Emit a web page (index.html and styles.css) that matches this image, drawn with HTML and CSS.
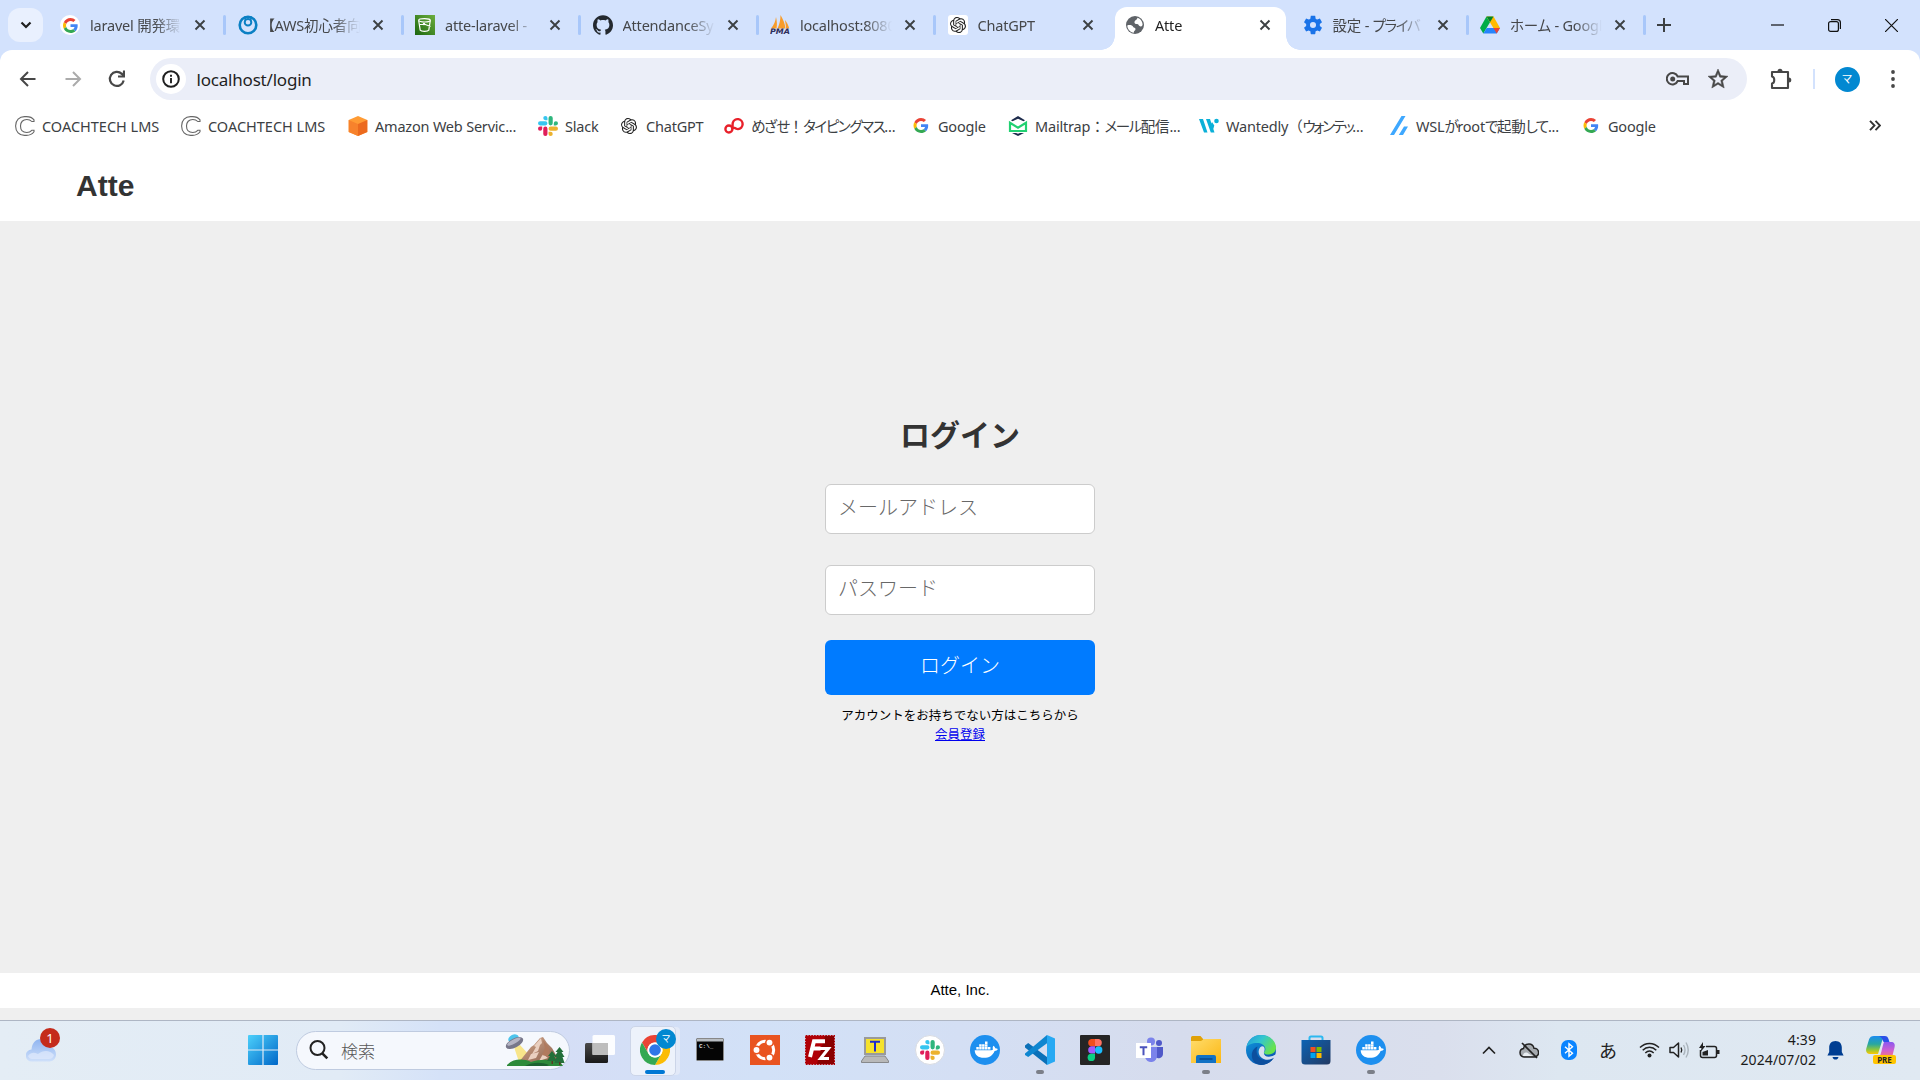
FILE: index.html
```html
<!DOCTYPE html>
<html lang="ja">
<head>
<meta charset="utf-8">
<title>Atte</title>
<link rel="stylesheet" href="styles.css">
</head>
<body>
<svg class="defs" aria-hidden="true">
  <defs>
    <linearGradient id="gWin" x1="0" y1="0" x2="1" y2="1"><stop offset="0" stop-color="#4cd0fb"/><stop offset="1" stop-color="#0067c8"/></linearGradient>
    <linearGradient id="gCloud" x1="0" y1="0" x2="0" y2="1"><stop offset="0" stop-color="#8fb4f0"/><stop offset="1" stop-color="#cfe0fa"/></linearGradient>
    <linearGradient id="gFolder" x1="0" y1="0" x2="1" y2="1"><stop offset="0" stop-color="#ffdc6b"/><stop offset="1" stop-color="#fcb713"/></linearGradient>
    <linearGradient id="gEdgeTop" x1="0" y1="0" x2="1" y2=".5"><stop offset="0" stop-color="#2297dc"/><stop offset=".5" stop-color="#33c6cf"/><stop offset="1" stop-color="#68e34c"/></linearGradient>
    <linearGradient id="gEdgeMid" x1="0" y1="0" x2=".6" y2="1"><stop offset="0" stop-color="#0f9be0"/><stop offset="1" stop-color="#0b56b0"/></linearGradient>
    <linearGradient id="gStore" x1="0" y1="0" x2="1" y2="1"><stop offset="0" stop-color="#0c63b4"/><stop offset="1" stop-color="#233a63"/></linearGradient>
    <linearGradient id="gMount" x1="0" y1="0" x2="1" y2="1"><stop offset="0" stop-color="#d3a88c"/><stop offset="1" stop-color="#8a5f4c"/></linearGradient>
    <linearGradient id="gCopA" x1="0" y1="0" x2="0" y2="1"><stop offset="0" stop-color="#1a8cf0"/><stop offset=".45" stop-color="#28a7a0"/><stop offset=".75" stop-color="#8cc63e"/><stop offset="1" stop-color="#ffc800"/></linearGradient>
    <linearGradient id="gCopB" x1="0" y1="0" x2="0" y2="1"><stop offset="0" stop-color="#8a58f0"/><stop offset=".5" stop-color="#d060d0"/><stop offset="1" stop-color="#ff7e62"/></linearGradient>
    <linearGradient id="gBucket" x1="0" y1="1" x2="1" y2="0"><stop offset="0" stop-color="#1b660f"/><stop offset="1" stop-color="#6cae3e"/></linearGradient>
    <linearGradient id="gDark" x1="0" y1="0" x2="0" y2="1"><stop offset="0" stop-color="#4a4a4a"/><stop offset="1" stop-color="#191919"/></linearGradient>

    <symbol id="google" viewBox="0 0 48 48">
      <path fill="#EA4335" d="M24 9.5c3.54 0 6.71 1.22 9.21 3.6l6.85-6.85C35.9 2.38 30.47 0 24 0 14.62 0 6.51 5.38 2.56 13.22l7.98 6.19C12.43 13.72 17.74 9.5 24 9.5z"/>
      <path fill="#4285F4" d="M46.98 24.55c0-1.57-.15-3.09-.38-4.55H24v9.02h12.94c-.58 2.96-2.26 5.48-4.78 7.18l7.73 6c4.51-4.18 7.09-10.36 7.09-17.65z"/>
      <path fill="#FBBC05" d="M10.53 28.59c-.48-1.45-.76-2.99-.76-4.59s.27-3.14.76-4.59l-7.98-6.19C.92 16.46 0 20.12 0 24c0 3.88.92 7.54 2.56 10.78l7.97-6.19z"/>
      <path fill="#34A853" d="M24 48c6.48 0 11.93-2.13 15.89-5.81l-7.73-6c-2.15 1.45-4.92 2.3-8.16 2.3-6.26 0-11.57-4.22-13.47-9.91l-7.98 6.19C6.51 42.62 14.62 48 24 48z"/>
    </symbol>
    <symbol id="openai" viewBox="0 0 24 24">
      <path fill="#222" d="M22.2819 9.8211a5.9847 5.9847 0 0 0-.5157-4.9108 6.0462 6.0462 0 0 0-6.5098-2.9A6.0651 6.0651 0 0 0 4.9807 4.1818a5.9847 5.9847 0 0 0-3.9977 2.9 6.0462 6.0462 0 0 0 .7427 7.0966 5.98 5.98 0 0 0 .511 4.9107 6.051 6.051 0 0 0 6.5146 2.9001A5.9847 5.9847 0 0 0 13.2599 24a6.0557 6.0557 0 0 0 5.7718-4.2058 5.9894 5.9894 0 0 0 3.9977-2.9001 6.0557 6.0557 0 0 0-.7475-7.0729zm-9.022 12.6081a4.4755 4.4755 0 0 1-2.8764-1.0408l.1419-.0804 4.7783-2.7582a.7948.7948 0 0 0 .3927-.6813v-6.7369l2.02 1.1686a.071.071 0 0 1 .038.052v5.5826a4.504 4.504 0 0 1-4.4945 4.4944zm-9.6607-4.1254a4.4708 4.4708 0 0 1-.5346-3.0137l.142.0852 4.783 2.7582a.7712.7712 0 0 0 .7806 0l5.8428-3.3685v2.3324a.0804.0804 0 0 1-.0332.0615L9.74 19.9502a4.4992 4.4992 0 0 1-6.1408-1.6464zM2.3408 7.8956a4.485 4.485 0 0 1 2.3655-1.9728V11.6a.7664.7664 0 0 0 .3879.6765l5.8144 3.3543-2.0201 1.1685a.0757.0757 0 0 1-.071 0l-4.8303-2.7865A4.504 4.504 0 0 1 2.3408 7.872zm16.5963 3.8558L13.1038 8.364 15.1192 7.2a.0757.0757 0 0 1 .071 0l4.8303 2.7913a4.4944 4.4944 0 0 1-.6765 8.1042v-5.6772a.79.79 0 0 0-.407-.667zm2.0107-3.0231l-.142-.0852-4.7735-2.7818a.7759.7759 0 0 0-.7854 0L9.409 9.2297V6.8974a.0662.0662 0 0 1 .0284-.0615l4.8303-2.7866a4.4992 4.4992 0 0 1 6.6802 4.66zM8.3065 12.863l-2.02-1.1638a.0804.0804 0 0 1-.038-.0567V6.0742a4.4992 4.4992 0 0 1 7.3757-3.4537l-.142.0805L8.704 5.459a.7948.7948 0 0 0-.3927.6813zm1.0976-2.3654l2.602-1.4998 2.6069 1.4998v2.9994l-2.5974 1.4997-2.6067-1.4997Z"/>
    </symbol>
    <path id="slackArm" d="M5.042 15.165a2.528 2.528 0 0 1-2.52 2.523A2.528 2.528 0 0 1 0 15.165a2.527 2.527 0 0 1 2.522-2.52h2.52v2.52zM6.313 15.165a2.527 2.527 0 0 1 2.521-2.52 2.527 2.527 0 0 1 2.521 2.52v6.313A2.528 2.528 0 0 1 8.834 24a2.528 2.528 0 0 1-2.521-2.522v-6.313z"/>
    <symbol id="slack" viewBox="0 0 24 24">
      <use href="#slackArm" fill="#E01E5A"/>
      <use href="#slackArm" fill="#36C5F0" transform="rotate(90 12 12)"/>
      <use href="#slackArm" fill="#2EB67D" transform="rotate(180 12 12)"/>
      <use href="#slackArm" fill="#ECB22E" transform="rotate(270 12 12)"/>
    </symbol>
    <symbol id="close" viewBox="0 0 12 12"><path d="M1.5 1.5l9 9M10.5 1.5l-9 9" fill="none" stroke="#3c4043" stroke-width="1.9"/></symbol>
    <symbol id="coach" viewBox="0 0 20 20">
      <path d="M19 5.5V3.8C17.300 1.600 14.800.6 11.500.6H9.500C4.300.6.6 4.500.6 10s3.700 9.400 8.900 9.400h2c3.300 0 5.800-1.200 7.500-3.600v-1.500h-2.200c-1.200 1.400-2.800 2.200-5 2.200-3.900 0-6.300-2.500-6.300-6.500s2.400-6.500 6.300-6.500c2.200 0 3.800.7 5 2z" fill="none" stroke="#666" stroke-width="1.100"/>
    </symbol>
    <symbol id="docker" viewBox="0 0 30 30">
      <circle cx="15" cy="15" r="15" fill="#1d8fef"/>
      <path fill="#fff" d="M4.700 15.300h16.500c.8 0 1.500-.3 1.800-.8-.5-1.300-.4-2.600.4-3.800 1.100.7 1.700 1.600 1.800 2.600 1 0 1.900.1 2.700.7-.6 1.300-1.700 1.900-3.300 1.900-2 4.700-5.500 6.900-10.600 6.900-5.800 0-9.200-2.600-9.300-7.500z"/>
      <path fill="#fff" d="M6.300 12h2.500v2.500H6.300zM9.200 12h2.500v2.500H9.200zM12.100 12h2.500v2.500h-2.500zM15 12h2.500v2.500H15zM17.900 12h2.500v2.500h-2.500zM9.200 9.200h2.500v2.500H9.200zM12.100 9.200h2.500v2.500h-2.500zM15 9.200h2.500v2.500H15zM15 6.400h2.500v2.500H15z"/>
    </symbol>
  </defs>
</svg>

<div class="screen">
  <div class="tabstrip">
    <button class="tab-search"><svg width="12" height="8" viewBox="0 0 12 8"><path d="M1.500 1.500L6 6l4.500-4.500" fill="none" stroke="#1f1f1f" stroke-width="2.200"/></svg></button>
    <div class="tabs">
      <div class="tab">
        <span class="fav fav-round"><svg width="15" height="15"><use href="#google"/></svg></span>
        <span class="tab-title">laravel 開発環</span><svg class="x" width="12" height="12"><use href="#close"/></svg><i class="sep"></i>
      </div>
      <div class="tab">
        <span class="fav"><svg width="20" height="20" viewBox="0 0 20 20"><circle cx="10" cy="10" r="8.300" fill="none" stroke="#0b80c4" stroke-width="2.600"/><circle cx="10" cy="7.200" r="3.300" fill="none" stroke="#0b80c4" stroke-width="2"/><path d="M7.200 1v5M12.800 1v5" stroke="#0b80c4" stroke-width="1.500"/></svg></span>
        <span class="tab-title">【AWS初心者向</span><svg class="x" width="12" height="12"><use href="#close"/></svg><i class="sep"></i>
      </div>
      <div class="tab">
        <span class="fav"><svg width="20" height="20" viewBox="0 0 20 20"><path fill="url(#gBucket)" d="M0 0h20v20H0z"/><g fill="none" stroke="#fff" stroke-width="1.200"><ellipse cx="9.500" cy="5.300" rx="5.800" ry="1.700"/><path d="M3.700 5.500l1.500 9.700c1 1.500 7.600 1.500 8.600 0l1.500-9.700M9 9l6.500 2.500M5 9.500h6"/></g><circle cx="9" cy="9" r="1.200" fill="#fff"/></svg></span>
        <span class="tab-title">atte-laravel -</span><svg class="x" width="12" height="12"><use href="#close"/></svg><i class="sep"></i>
      </div>
      <div class="tab">
        <span class="fav"><svg width="20" height="20" viewBox="0 0 24 24"><path fill="#24292f" d="M12 .297c-6.630 0-12 5.373-12 12 0 5.303 3.438 9.800 8.205 11.385.6.113.82-.258.82-.577 0-.285-.01-1.040-.015-2.040-3.338.724-4.042-1.610-4.042-1.610C4.422 18.070 3.633 17.700 3.633 17.700c-1.087-.744.084-.729.084-.729 1.205.084 1.838 1.236 1.838 1.236 1.070 1.835 2.809 1.305 3.495.998.108-.776.417-1.305.76-1.605-2.665-.3-5.466-1.332-5.466-5.930 0-1.310.465-2.380 1.235-3.220-.135-.303-.54-1.523.105-3.176 0 0 1.005-.322 3.300 1.230.96-.267 1.980-.399 3-.405 1.020.006 2.040.138 3 .405 2.280-1.552 3.285-1.230 3.285-1.230.645 1.653.24 2.873.12 3.176.765.84 1.230 1.910 1.230 3.220 0 4.610-2.805 5.625-5.475 5.920.42.36.81 1.096.81 2.220 0 1.606-.015 2.896-.015 3.286 0 .315.21.69.825.57C20.565 22.092 24 17.592 24 12.297c0-6.627-5.373-12-12-12"/></svg></span>
        <span class="tab-title">AttendanceSy</span><svg class="x" width="12" height="12"><use href="#close"/></svg><i class="sep"></i>
      </div>
      <div class="tab">
        <span class="fav"><svg width="20" height="20" viewBox="0 0 20 20"><path fill="#f89c2a" d="M1 13.500C4 10 5.500 6 6 2c1 4 1.200 8 .5 11.500zM7.500 13.500C9.500 9 10.500 5 10.500 0c2.500 4 4.500 9 5 13.500zM15 5c2 2.500 3.500 5.500 4.200 8.500h-3z"/><text class="pma" x="0" y="19" textLength="20" lengthAdjust="spacingAndGlyphs">PMA</text></svg></span>
        <span class="tab-title">localhost:8080</span><svg class="x" width="12" height="12"><use href="#close"/></svg><i class="sep"></i>
      </div>
      <div class="tab">
        <span class="fav fav-square"><svg width="16" height="16"><use href="#openai"/></svg></span>
        <span class="tab-title">ChatGPT</span><svg class="x" width="12" height="12"><use href="#close"/></svg>
      </div>
      <div class="tab active">
        <span class="fav"><svg width="20" height="20" viewBox="0 0 20 20"><circle cx="10" cy="10" r="9" fill="#5f6368"/><path fill="#fff" d="M2.300 10.500c2.200-.8 5.200-.3 5.800 1.200.5 1.300 2.600.8 2.400 2.500-.2 1.500-1.800 1.500-1.700 3.500-3.600-.4-6.500-3.600-6.500-7.200zM12.500 2.800c3 1 5.200 4 5.100 7.200-1.100 1.500-1.900 2-3.100 1.100-1-.8-.8-2-2.500-2.100-1.800 0-2.800-.8-2.500-2.300.3-1.400 2.600-1.500 3-3.900z"/></svg></span>
        <span class="tab-title">Atte</span><svg class="x" width="12" height="12"><use href="#close"/></svg>
      </div>
      <div class="tab">
        <span class="fav"><svg width="22" height="22" viewBox="0 0 24 24"><path fill="#1a73e8" fill-rule="evenodd" d="M19.430 12.980c.04-.32.07-.64.07-.98s-.03-.66-.07-.98l2.110-1.650c.19-.15.24-.42.12-.64l-2-3.460c-.12-.22-.39-.3-.61-.22l-2.490 1c-.52-.4-1.080-.73-1.690-.98l-.38-2.650C14.460 2.180 14.250 2 14 2h-4c-.25 0-.46.18-.49.42l-.38 2.650c-.61.25-1.170.59-1.690.98l-2.490-1c-.23-.09-.49 0-.61.22l-2 3.460c-.13.22-.07.49.12.64l2.110 1.650c-.04.32-.07.65-.07.98s.03.66.07.98l-2.110 1.650c-.19.15-.24.42-.12.64l2 3.460c.12.22.39.3.61.22l2.490-1c.52.4 1.080.73 1.690.98l.38 2.650c.03.24.24.42.49.42h4c.25 0 .46-.18.49-.42l.38-2.650c.61-.25 1.170-.59 1.690-.98l2.490 1c.23.09.49 0 .61-.22l2-3.460c.12-.22.07-.49-.12-.64zM12 15.300a3.300 3.300 0 1 1 0-6.600 3.300 3.300 0 0 1 0 6.600z"/></svg></span>
        <span class="tab-title">設定 - <span class="kana">プライバ</span></span><svg class="x" width="12" height="12"><use href="#close"/></svg><i class="sep"></i>
      </div>
      <div class="tab">
        <span class="fav"><svg width="20" height="20" viewBox="0 0 20 20"><path fill="#00ac47" d="M6.500 1.500L0 13l3.300 5.500L10 7.200z"/><path fill="#ffba00" d="M6.500 1.500h7L20 13h-6.600z"/><path fill="#2684fc" d="M6.700 13H20l-3.300 5.500H3.300z"/><path fill="#ea4335" d="M13.400 13H20l-3.300 5.500z"/><path fill="#00832d" d="M6.500 1.500h7L10 7.200z"/></svg></span>
        <span class="tab-title">ホーム - Googl</span><svg class="x" width="12" height="12"><use href="#close"/></svg><i class="sep"></i>
      </div>
    </div>
    <svg class="new-tab" width="14" height="14" viewBox="0 0 14 14"><path d="M7 0v14M0 7h14" stroke="#3c4043" stroke-width="2"/></svg>
    <div class="win-controls">
      <svg width="13" height="13" viewBox="0 0 13 13"><path d="M0 6h13" stroke="#111" stroke-width="1.200"/></svg>
      <svg width="13" height="13" viewBox="0 0 13 13"><path d="M.6 4.600a2 2 0 0 1 2-2h5.800a2 2 0 0 1 2 2v5.800a2 2 0 0 1-2 2H2.600a2 2 0 0 1-2-2zM3 .6h6.400a3 3 0 0 1 3 3V10" fill="none" stroke="#111" stroke-width="1.200"/></svg>
      <svg width="13" height="13" viewBox="0 0 13 13"><path d="M0 0l13 13M13 0L0 13" stroke="#111" stroke-width="1.200"/></svg>
    </div>
  </div>

  <div class="toolbar">
    <svg class="nav" width="24" height="24" viewBox="0 0 24 24"><path fill="none" stroke="#474747" stroke-width="2" d="M19.500 12H5M12 5l-7 7 7 7"/></svg>
    <svg class="nav" width="24" height="24" viewBox="0 0 24 24"><path fill="none" stroke="#ababab" stroke-width="2" d="M4.500 12H19M12 5l7 7-7 7"/></svg>
    <svg class="nav" width="24" height="24" viewBox="0 0 24 24"><path fill="none" stroke="#474747" stroke-width="2.200" d="M18.700 13.500a7 7 0 1 1-1.900-6.600l2.200 2.200"/><path fill="#474747" d="M20 3.500v7h-7v-2h4.500l.5-5z"/></svg>
    <div class="omnibox">
      <span class="site-info"><svg width="18" height="18" viewBox="0 0 18 18"><circle cx="9" cy="9" r="7.800" fill="none" stroke="#1f1f1f" stroke-width="2"/><path d="M9 8v5.300M9 4.700v2" stroke="#1f1f1f" stroke-width="1.900"/></svg></span>
      <span class="url">localhost/login</span>
      <svg class="key" width="24" height="14" viewBox="0 0 24 14"><path fill="none" stroke="#474747" stroke-width="2" d="M11.700 4.500H22V12h-4V9h-6.300A5.700 5.700 0 1 1 11.700 4.500z"/><circle cx="6.700" cy="7" r="2.500" fill="#474747"/></svg>
      <svg class="star" width="24" height="24" viewBox="0 0 24 24"><path fill="#474747" stroke="#474747" stroke-width=".5" d="M22 9.240l-7.190-.62L12 2 9.190 8.630 2 9.240l5.460 4.730L5.820 21 12 17.270 18.180 21l-1.630-7.030L22 9.240zM12 15.400l-3.760 2.270 1-4.280-3.320-2.880 4.380-.38L12 6.100l1.710 4.040 4.380.38-3.320 2.880 1 4.280L12 15.400z"/></svg>
    </div>
    <svg class="ext" width="24" height="24" viewBox="0 0 24 24"><path fill="none" stroke="#474747" stroke-width="2.100" stroke-linejoin="round" d="M3 5h16v16H3v-4.500c3-.5 3-6.500 0-7z"/><path fill="#474747" d="M8.500 4.200a2.500 2.500 0 0 1 5 0zM19.800 10.500a2.500 2.500 0 0 1 0 5z"/></svg>
    <i class="tb-sep"></i>
    <span class="avatar">マ</span>
    <svg class="more" width="4" height="20" viewBox="0 0 4 20"><g fill="#474747"><circle cx="2" cy="3" r="1.900"/><circle cx="2" cy="10" r="1.900"/><circle cx="2" cy="17" r="1.900"/></g></svg>
  </div>

  <div class="bookmarks">
    <span class="bm caps"><svg width="20" height="20"><use href="#coach"/></svg><b>COACHTECH LMS</b></span>
    <span class="bm caps"><svg width="20" height="20"><use href="#coach"/></svg><b>COACHTECH LMS</b></span>
    <span class="bm"><svg width="20" height="20" viewBox="0 0 20 20"><path fill="#ff9b34" d="M10 0l9.300 4v12L10 20 .7 16V4z"/><path fill="#f7822c" d="M.7 4L10 8v12L.7 16z"/><path fill="#ec6a1e" d="M19.300 4L10 8v12l9.300-4z"/></svg><b>Amazon Web Servic...</b></span>
    <span class="bm"><svg width="20" height="20"><use href="#slack"/></svg><b>Slack</b></span>
    <span class="bm"><svg width="20" height="16" viewBox="0 0 24 24"><use href="#openai"/></svg><b>ChatGPT</b></span>
    <span class="bm"><svg width="20" height="18" viewBox="0 0 20 18"><g fill="none" stroke="#e8202a" stroke-width="2.400"><circle cx="4.900" cy="12" r="3.500"/><path d="M8.400 12C9 10 8.200 8 8.800 5.800a5 5 0 1 1 5.200 6.300c-2.600.2-3.700-1.700-5.600-2.300"/></g></svg><b><span class="kana">めざせ</span><span class="full">！</span><span class="kana">タイピングマス</span>...</b></span>
    <span class="bm"><svg width="20" height="15"><use href="#google"/></svg><b>Google</b></span>
    <span class="bm"><svg width="20" height="20" viewBox="0 0 20 20"><path fill="none" stroke="#22d172" stroke-width="2.200" d="M2 15V6.800l8 5 8-5V15z"/><path fill="#1d2b4c" d="M3 4.200L10 0l7 4.200-1.500 1L10 2.800 4.500 5.200zM4 17h4l2 .8 2-.8h4l-6 3z"/></svg><b>Mailtrap<span class="full">：</span><span class="kana">メール</span>配信...</b></span>
    <span class="bm"><svg width="20" height="16" viewBox="0 0 20 16"><path fill="#0bb0d8" d="M0 1h4l4.500 13.500H5zM7 1h4l4.500 13.500h-3.700zM11.500 9l1.500-5 2.300 3.500-2 7z"/><circle cx="17.500" cy="3" r="2.300" fill="#0bb0d8"/></svg><b>Wantedly<span class="full">（</span><span class="kana tight">ウォンテッ</span>...</b></span>
    <span class="bm"><svg width="20" height="20" viewBox="0 0 20 20"><path fill="#3ea8ff" d="M12.500 0h4L5 19H1zM15 10.500h4L14 19h-4.200z"/></svg><b>WSL<span class="kana">が</span>root<span class="kana">で</span>起動<span class="kana">して</span>...</b></span>
    <span class="bm"><svg width="20" height="15"><use href="#google"/></svg><b>Google</b></span>
    <svg class="overflow" width="12" height="11" viewBox="0 0 12 11"><path d="M1 .8l4.500 4.700L1 10.200M6.500.8L11 5.500l-4.500 4.700" fill="none" stroke="#333" stroke-width="1.900"/></svg>
  </div>

  <div class="page">
    <header class="header"><h1 class="logo">Atte</h1></header>
    <main class="main">
      <h2 class="title">ログイン</h2>
      <form class="form">
        <input class="field" type="email" placeholder="メールアドレス">
        <input class="field" type="password" placeholder="パスワード">
        <button class="submit" type="button">ログイン</button>
      </form>
      <p class="note">アカウントをお持ちでない方はこちらから</p>
      <a class="register" href="#">会員登録</a>
    </main>
    <footer class="footer">Atte, Inc.</footer>
  </div>

  <div class="taskbar">
    <div class="weather">
      <svg width="30" height="24" viewBox="0 0 30 24"><path fill="url(#gCloud)" d="M6 23.500a6 6 0 0 1-.5-12C6 5 10 1 15 1c5 0 8.300 3.300 9 8 3.500.5 6 3.500 6 7.500 0 4-3 7-6.500 7z"/><path fill="#dfeafc" opacity=".7" d="M2 18c3-4 6-4 10-2 5-4 12-4 16 1-1 3-3 4-5 4H6c-2 0-3-1-4-3z"/></svg>
      <span class="count">1</span>
    </div>
    <svg class="start" width="30" height="30" viewBox="0 0 30 30"><path fill="url(#gWin)" d="M1 0h13.400v14.400H0V1a1 1 0 0 1 1-1zM15.600 0H29a1 1 0 0 1 1 1v13.400H15.600zM0 15.600h14.400V30H1a1 1 0 0 1-1-1zM15.600 15.600H30V29a1 1 0 0 1-1 1H15.600z"/></svg>
    <div class="search">
      <svg width="20" height="20" viewBox="0 0 20 20"><circle cx="8.500" cy="8" r="7" fill="none" stroke="#222" stroke-width="2"/><path d="M13.300 13.300l5 5" stroke="#222" stroke-width="2.600"/></svg>
      <span class="search-text">検索</span>
      <svg class="art" width="60" height="32" viewBox="0 0 60 32">
        <path fill="#f8e58a" d="M9 13l6-2 11 12-12 5z"/>
        <path fill="url(#gMount)" d="M14 28L26 13l3-2 6-7 3-1 4 6 5 5 8 14z"/>
        <path fill="#ead0c0" d="M36 4l-7 8 2 1-4 7 6-3 2-6 2-2zM26 20l-3 6 8-2 3-6zM38 20l-4 7 9-3z"/>
        <path fill="#b07a5e" d="M38 6l2 8-3 7 8 2-1-9z"/>
        <path fill="#2d8a3a" d="M2 31c5-6 16-7 24-3 9-3 22-3 30 1l2 3H2z"/>
        <path fill="#1c6130" d="M20 32c8-4 16-4 24-1l-2 1z"/>
        <path fill="#24703a" d="M47 17l-4 5h2l-3 5h10l-3-5h2zM54.500 13l-4 5h2l-3 5h2l-2 6h10l-2-6h2l-3-5h2z"/>
        <path fill="#5a3a22" d="M46.500 27h1.500v3h-1.500zM54 28h1.500v3H54z"/>
        <ellipse cx="8.500" cy="4.500" rx="5.500" ry="3.800" fill="#4cc4ec" transform="rotate(-25 8.500 4.500)"/>
        <ellipse cx="9.500" cy="9" rx="9.500" ry="4.600" fill="#77778a" transform="rotate(-28 9.500 9)"/>
        <ellipse cx="8.800" cy="7.600" rx="7.500" ry="2.200" fill="#b4b4c4" transform="rotate(-28 8.800 7.600)"/>
      </svg>
    </div>
    <div class="apps">
      <span class="app"><svg width="30" height="30" viewBox="0 0 30 30"><rect x="0" y="8" width="23" height="20" rx="1.500" fill="url(#gDark)"/><rect x="7.500" y="0" width="22.500" height="20" rx="1.500" fill="#fff" opacity=".93"/><path d="M7.500 8H23v12H7.500z" fill="#bdbdbd"/></svg></span>
      <span class="app current"><svg width="30" height="30" viewBox="0 0 48 48"><circle cx="24" cy="24" r="24" fill="#fff"/><path fill="#ea4335" d="M3.200 12A24 24 0 0 1 44.800 12H24a12 12 0 0 0-10.400 18z"/><path fill="#fbbc05" d="M44.800 12A24 24 0 0 1 24 48l10.400-18A12 12 0 0 0 24 12z"/><path fill="#34a853" d="M24 48A24 24 0 0 1 3.200 12l10.400 18A12 12 0 0 0 34.400 30z"/><circle cx="24" cy="24" r="12" fill="#fff"/><circle cx="24" cy="24" r="9.300" fill="#2f76e8"/></svg><em class="profile">マ</em></span>
      <span class="app"><svg width="28" height="24" viewBox="0 0 28 24"><rect x=".5" y=".5" width="27" height="22" rx="1" fill="#050505" stroke="#888"/><path fill="#b9bec3" d="M1 1h26v2.500H1z"/><text class="cmd" x="3" y="9.500">C:\_</text></svg></span>
      <span class="app"><svg width="30" height="30" viewBox="0 0 30 30"><path fill="#e95420" d="M0 0h30v30H0z"/><circle cx="15" cy="15" r="8.700" fill="none" stroke="#fff" stroke-width="3"/><g fill="#fff" stroke="#e95420" stroke-width="1.500"><circle cx="6.500" cy="15" r="3.700"/><circle cx="19.500" cy="7.600" r="3.700"/><circle cx="19.500" cy="22.600" r="3.700"/></g></svg></span>
      <span class="app"><svg width="30" height="30" viewBox="0 0 30 30"><rect x=".7" y=".7" width="28.600" height="28.600" fill="#b00006" stroke="#b00006" stroke-width="1.400" stroke-dasharray="1.600 1.200"/><path fill="#8a0000" d="M20 1l9 0v28H12z"/><g fill="none" stroke="#fff" stroke-width="4"><path d="M5 22L9 6.300H20M7.500 13.500h8"/><path stroke-width="3" d="M15 13.500h8.500L15.500 23.500H24"/></g></svg></span>
      <span class="app"><svg width="28" height="26" viewBox="0 0 28 26"><path fill="#9a9a9a" d="M3 0h22v18H3z"/><path fill="#f6e22c" d="M5 2h18v14H5z"/><path fill="#b9b9b9" stroke="#777" stroke-width=".8" d="M4 19h20l3.500 5v1.500H.5V24z"/><path d="M9 4.800h10M14 5v9.500" stroke="#1c2bd0" stroke-width="2"/></svg></span>
      <span class="app"><span class="disc"><svg width="20" height="20"><use href="#slack"/></svg></span></span>
      <span class="app"><svg width="30" height="30"><use href="#docker"/></svg></span>
      <span class="app running"><svg width="30" height="30" viewBox="0 0 30 30"><path fill="#0b70b8" d="M0 10.500L3.200 8 22 22v8L0 12.500z"/><path fill="#0e86d0" d="M0 18.500L22 0v8.200L3.200 22 0 20z"/><path fill="#27a9f3" d="M22 0l8 3.500v23L22 30z"/></svg></span>
      <span class="app"><svg width="30" height="30" viewBox="0 0 30 30"><rect width="30" height="30" rx="1" fill="#252525"/><path fill="#f24e1e" d="M11.300 4H15v7.300h-3.700a3.700 3.700 0 0 1 0-7.300z"/><path fill="#ff7262" d="M15 4h3.700a3.700 3.700 0 0 1 0 7.300H15z"/><path fill="#a259ff" d="M11.300 11.300H15v7.300h-3.700a3.700 3.700 0 0 1 0-7.300z"/><circle cx="18.700" cy="15" r="3.700" fill="#1abcfe"/><path fill="#0acf83" d="M11.300 18.700H15v3.700a3.700 3.700 0 1 1-3.700-3.700z"/></svg></span>
      <span class="app"><svg width="28" height="26" viewBox="0 0 28 26"><circle cx="15" cy="4.500" r="4" fill="#7b83eb"/><circle cx="23" cy="6" r="3" fill="#5059c9"/><path fill="#5059c9" d="M19 10h8v6.500a4.500 4.500 0 0 1-8 3z"/><path fill="#7b83eb" d="M9 10h12v8a6 6 0 0 1-12 2z"/><path fill="#fff" d="M0 6h15v15H0z"/><path d="M3.800 10.300h7.400M7.500 10.300v8" stroke="#4b53bc" stroke-width="2"/></svg></span>
      <span class="app running"><svg width="30" height="28" viewBox="0 0 30 28"><path fill="#e0a108" d="M0 1.500A1.500 1.500 0 0 1 1.500 0h8l3 3.500V8H0z"/><path fill="url(#gFolder)" d="M0 5h10l3-2h17v24H0z"/><path fill="#1272c4" d="M5 21a2 2 0 0 1 2-2h16a2 2 0 0 1 2 2v6H5z"/><path d="M8.500 23h13" stroke="#0a4a8c" stroke-width="1.500"/></svg></span>
      <span class="app"><svg width="30" height="30" viewBox="0 0 30 30"><circle cx="15" cy="15" r="15" fill="url(#gEdgeMid)"/><path fill="url(#gEdgeTop)" d="M.5 12C2 4 8 0 15 0c9 0 15 6 15 12.500 0 4.500-3.500 7-7.500 7-3 0-5-1-4.500-2.500 1-1 1.500-2 1.300-3.500C19 10 15 8 11 8 6 8 2 10 .5 12z"/><path fill="#0c4f9e" d="M11.500 11.500c-3 8 2 14 9 14 3 0 5-1 7.500-3-3 5-8 7.500-13 7.500C8 29 5 24 6 18c.5-3 3-5.500 5.500-6.500z"/><path fill="#d6dff0" d="M18 17c-1 4.500 5 6.500 11.500 2.500l1 2c-5 3.500-11 4.500-14.500 1.500-3.500-2.700-4.500-7-2-10.500 3-3 6 0 4 4.500z"/></svg></span>
      <span class="app"><svg width="30" height="30" viewBox="0 0 30 30"><path d="M8.500 7V3A1.500 1.500 0 0 1 10 1.500h10A1.500 1.500 0 0 1 21.500 3v4" fill="none" stroke="#2cb8f0" stroke-width="2"/><path fill="url(#gStore)" d="M.5 5h29v21a3.500 3.500 0 0 1-3.500 3.500H4A3.500 3.500 0 0 1 .5 26z"/><path fill="#f25022" d="M9.500 12h5v5h-5z"/><path fill="#7fba00" d="M15.500 12h5v5h-5z"/><path fill="#00a4ef" d="M9.500 18h5v5h-5z"/><path fill="#ffb900" d="M15.500 18h5v5h-5z"/></svg></span>
      <span class="app running"><svg width="30" height="30"><use href="#docker"/></svg></span>
    </div>
    <div class="tray">
      <svg width="14" height="9" viewBox="0 0 14 9"><path d="M1 7.500l6-6 6 6" fill="none" stroke="#222" stroke-width="1.700"/></svg>
      <svg width="20" height="17" viewBox="0 0 20 17"><path d="M5 15a4.300 4.300 0 0 1-.5-8.500C5 3.500 7 2 10 2s4.500 2 5 4.300A4.300 4.300 0 0 1 15.500 15z" fill="#a6abb0" stroke="#222" stroke-width="1.500"/><path fill="#e9eef2" d="M4 14c0-3 3-5 6-2l4 2z"/><path d="M3 1l15 15" stroke="#222" stroke-width="1.700"/></svg>
      <svg width="16" height="20" viewBox="0 0 16 20"><rect width="16" height="20" rx="7" fill="#0a84ff"/><path d="M4 6.800l7.500 6.400L8 16.300V3.700l3.500 3.100L4 13.200" fill="none" stroke="#fff" stroke-width="1.400"/></svg>
      <span class="ime">あ</span>
      <svg width="21" height="16" viewBox="0 0 21 16"><g fill="none" stroke="#222" stroke-width="1.500"><path d="M1 5.500c5.500-5.500 13.500-5.500 19 0M3.700 8.300c4-4 9.600-4 13.600 0M6.300 11c2.600-2.400 5.800-2.400 8.400 0"/></g><circle cx="10.500" cy="13.500" r="2" fill="#222"/></svg>
      <svg width="20" height="18" viewBox="0 0 20 18"><path d="M1 6.500h3.500l5-4.500v14l-5-4.500H1z" fill="none" stroke="#222" stroke-width="1.500" stroke-linejoin="round"/><path d="M12 6.500q1.500 2.500 0 5" fill="none" stroke="#222" stroke-width="1.400"/><path d="M14.500 4q3 5 0 10M17 1.500q4.500 7.500 0 15" fill="none" stroke="#aab4bc" stroke-width="1.400"/></svg>
      <svg width="21" height="17" viewBox="0 0 21 17"><path d="M7 4.500h8.500A2 2 0 0 1 17.500 6.500v7a2 2 0 0 1-2 2h-12a2 2 0 0 1-2-2V8" fill="none" stroke="#222" stroke-width="1.500"/><path fill="#222" d="M18 8h2.500v4H18zM3.500 13.500V10L9 8v5.500zM4 0L0 6h2.500L1.500 10 6.500 4H4z"/></svg>
      <div class="clock"><span>4:39</span><span>2024/07/02</span></div>
      <svg width="17" height="20" viewBox="0 0 17 20"><path fill="#003e92" d="M8.500 1c4 0 6.300 2.800 6.300 6.500V12l1.800 3.500H.4L2.200 12V7.500C2.200 3.800 4.500 1 8.500 1zM5.500 17h6c-.5 2-1.500 2.500-3 2.500s-2.500-.5-3-2.500z"/></svg>
      <div class="copilot">
        <svg width="30" height="24" viewBox="0 0 30 24"><path fill="url(#gCopA)" d="M8 0h11c-3 2-5 13-7 18H4c-3 0-4.500-2-3.700-5.500L3 3.500C3.800 1 5.500 0 8 0z"/><path fill="#2a50e8" d="M13 0h6c3 0 3.500 3 4.500 6h-6c-1-3-2-5-4.500-6z"/><path fill="url(#gCopB)" d="M18 6h7c3 0 4.500 2 3.500 5.500l-2 8c-.5 2-2 3.500-4.500 3.500H12c3-2 4-12 6-17z"/></svg>
        <em class="pre">PRE</em>
      </div>
    </div>
  </div>
</div>
</body>
</html>
```
FILE: styles.css
```css
* { box-sizing: border-box; }
body { margin: 0; background: #fff; }
svg { display: block; flex: none; }
.defs { position: absolute; width: 0; height: 0; }

.screen {
  width: 1920px;
  height: 1080px;
  display: flex;
  flex-direction: column;
  overflow: hidden;
  font-family: "Noto Sans", "Noto Sans CJK JP", sans-serif;
}

/* Tab strip */
.tabstrip { height: 50px; background: #d3e2fd; display: flex; align-items: center; padding-left: 8px; }
.tab-search {
  width: 35px; height: 34px; border: 0; border-radius: 12px; background: #e9f0fe;
  display: flex; align-items: center; justify-content: center; padding: 0;
}
.tabs { display: flex; height: 50px; margin-left: 8px; }
.tab { width: 177.5px; height: 50px; display: flex; align-items: center; padding-left: 9px; position: relative; }
.fav { width: 20px; height: 20px; display: flex; align-items: center; justify-content: center; flex: none; }
.fav-round { background: #fff; border-radius: 50%; }
.fav-square { background: #fff; border-radius: 3px; }
.tab-title {
  width: 92px; margin-left: 10px; overflow: hidden; white-space: nowrap;
  font-size: 14.5px; line-height: 24px; letter-spacing: -0.2px; color: #45474a;
  font-feature-settings: "palt";
  -webkit-mask-image: linear-gradient(90deg, #000 70%, transparent);
  mask-image: linear-gradient(90deg, #000 70%, transparent);
}
.x { margin-left: 12px; }
.sep { width: 3px; height: 20px; border-radius: 2px; background: #a8c7fa; margin-left: 17px; }
.active::before {
  content: ""; position: absolute; left: -1px; top: 7px; width: 171px; height: 43px;
  background: #fff; border-radius: 12px 12px 0 0;
}
.active::after {
  content: ""; position: absolute; left: -15px; bottom: 0; width: 199px; height: 14px;
  background:
    radial-gradient(circle at 0 0, transparent 13.5px, #fff 14px) left / 14px 14px no-repeat,
    radial-gradient(circle at 100% 0, transparent 13.5px, #fff 14px) right / 14px 14px no-repeat;
}
.active > * { position: relative; z-index: 1; }
.active .tab-title { color: #1f1f1f; }
.pma { font: italic bold 7.5px "DejaVu Sans", sans-serif; fill: #2f2f5c; }
.new-tab { margin-left: 8px; }
.win-controls { margin-left: auto; display: flex; gap: 44px; padding-right: 22px; }

/* Half-width style kana of the interface font, and punctuation that keeps its full width */
.kana { letter-spacing: -1.4px; }
.kana.tight { letter-spacing: -2.4px; }
.full { font-family: "Noto Sans CJK JP", sans-serif; font-feature-settings: "palt" 0; }

/* Toolbar */
.toolbar { height: 57px; background: #fff; display: flex; align-items: center; padding: 1px 0 0 16px; position: relative; z-index: 0; }
.toolbar::before { content: ""; position: absolute; inset: 0; background: #d3e2fd; z-index: -2; }
.toolbar::after { content: ""; position: absolute; inset: 0; background: #fff; border-radius: 12px 12px 0 0; z-index: -1; }
.nav { margin-right: 20.5px; }
.omnibox { width: 1597px; height: 42px; border-radius: 21px; background: #ebeef8; display: flex; align-items: center; padding: 0 17px 0 6px; }
.site-info { width: 30px; height: 30px; border-radius: 50%; background: #fff; display: flex; align-items: center; justify-content: center; }
.url { flex: 1; margin-left: 11px; font-size: 17px; letter-spacing: -0.2px; color: #1f1f1f; }
.star { margin-left: 16px; }
.ext { margin-left: 22px; }
.tb-sep { width: 2px; height: 20px; background: #d3e2fd; margin-left: 20px; }
.avatar {
  width: 25px; height: 25px; border-radius: 50%; background: #0288d1; color: #fff; margin-left: 20px;
  font-size: 11px; line-height: 24px; text-align: center;
}
.more { margin-left: 31px; }

/* Bookmarks */
.bookmarks {
  height: 41px; background: #fff; display: grid; align-items: center; padding: 0 0 4px 15px;
  grid-template-columns: 166px 167px 190px 81px 105px 187px 97px 191px 190px 192px 288px auto;
  justify-content: start;
}
.bm { display: flex; align-items: center; gap: 7px; white-space: nowrap; }
.bm b { font-weight: 400; font-size: 14.5px; letter-spacing: -0.2px; line-height: 20px; color: #3c4043; font-feature-settings: "palt"; }
.caps b { letter-spacing: 0; }

/* Login page */
.page { height: 872px; background: #efefef; display: flex; flex-direction: column; font-family: "Liberation Sans", "Noto Sans CJK JP", sans-serif; }
.header { height: 73px; background: #fff; padding: 20px 0 0 76px; }
.logo { margin: 0; font-size: 30px; line-height: 35px; color: #333; }
.main { height: 752px; display: flex; flex-direction: column; align-items: center; padding-top: 192px; }
.title { margin: 0; font-size: 30px; line-height: 45px; color: #333; }
.form { width: 270px; margin-top: 26px; display: flex; flex-direction: column; }
.field {
  height: 50px; margin: 0 0 31px; padding: 0 12px 5px; border: 1px solid #ccc; border-radius: 6px;
  background: #fff; font: 300 20px "Noto Sans CJK JP", sans-serif;
}
.field + .field { margin-bottom: 25px; }
.field::placeholder { color: #686868; }
.submit {
  height: 55px; border: 0; border-radius: 6px; background: #007bff; color: #fff; padding: 0 0 6px;
  font: 300 20px "Noto Sans CJK JP", sans-serif;
}
.note { margin: 11px 0 0; font-size: 12.5px; line-height: 20px; color: #000; }
.register { font-size: 12.5px; line-height: 19px; color: #00e; }
.footer { height: 35px; background: #fff; text-align: center; font-size: 15px; line-height: 34px; color: #000; }

/* Taskbar */
.taskbar {
  height: 60px; border-top: 1px solid #aeb6c4; display: flex; align-items: center; padding-bottom: 1px;
  background: linear-gradient(90deg, #e4edf5 0, #e1ebf6 340px, #d5e2f8 440px, #d5def6 560px, #d2e1f7 760px, #d4dff4 960px, #d6dced 1180px, #dadfed 1440px, #dde7f1 1560px, #e0e9f2 1920px);
}
.weather { width: 248px; padding-left: 26px; position: relative; }
.count {
  position: absolute; left: 40px; top: -10px; width: 20px; height: 20px; border-radius: 50%;
  background: #c42b1c; color: #fff; font-size: 13px; line-height: 20px; text-align: center;
}
.search {
  width: 274px; height: 39px; margin-left: 18px; border: 1px solid #bfcbe0; border-radius: 20px;
  background: #f5f8fd; display: flex; align-items: center; padding: 0 4px 0 12px;
}
.search-text { flex: 1; margin-left: 12px; font-size: 17px; font-weight: 300; color: #555; }
.apps { display: grid; grid-template-columns: repeat(15, 55.1px); margin-left: 2px; }
.app { height: 48px; display: flex; align-items: center; justify-content: center; position: relative; }
.current::before {
  content: ""; position: absolute; left: 3px; top: 0; width: 44px; height: 48px; border-radius: 5px;
  background: #edf2fb; border: 1px solid #ccd5e8; box-shadow: 5px 0 0 -1px #e2e9f8;
}
.current svg { position: relative; }
.current::after, .running::after {
  content: ""; position: absolute; bottom: 0; left: 50%; height: 4px; border-radius: 2px;
}
.current::after { width: 20px; margin-left: -10px; background: #0078d4; }
.running::after { width: 8px; margin-left: -4px; background: #7b7f88; }
.profile {
  position: absolute; left: 29px; top: 3px; width: 20px; height: 20px; border-radius: 50%;
  background: #0288d1; color: #fff; font: 9px/19px "Noto Sans CJK JP", sans-serif; text-align: center;
}
.cmd { font: bold 6px "Liberation Mono", monospace; fill: #ddd; }
.disc { width: 30px; height: 30px; border-radius: 50%; background: #fff; border: 1px solid #d8dbe2; display: flex; align-items: center; justify-content: center; }
.tray { margin-left: auto; display: flex; align-items: center; padding-right: 24px; }
.tray > svg:nth-child(2) { margin-left: 23px; }
.tray > svg:nth-child(3) { margin-left: 22px; }
.ime { margin-left: 22px; font: 18px/24px "Noto Sans CJK JP", sans-serif; color: #222; }
.tray > svg:nth-child(5) { margin-left: 22px; }
.tray > svg:nth-child(6) { margin-left: 9px; }
.tray > svg:nth-child(7) { margin-left: 10px; }
.clock { width: 96px; display: flex; flex-direction: column; align-items: flex-end; font-size: 14px; line-height: 20px; letter-spacing: 0.1px; color: #1b1b1b; }
.clock + svg { margin-left: 11px; }
.copilot { margin-left: 22px; position: relative; width: 30px; height: 28px; }
.pre {
  position: absolute; left: 7px; bottom: 0; width: 23px; height: 9px; border-radius: 2px; background: #ffc400;
  font: bold 8px/9px "Noto Sans", sans-serif; color: #222; text-align: center;
}
```
